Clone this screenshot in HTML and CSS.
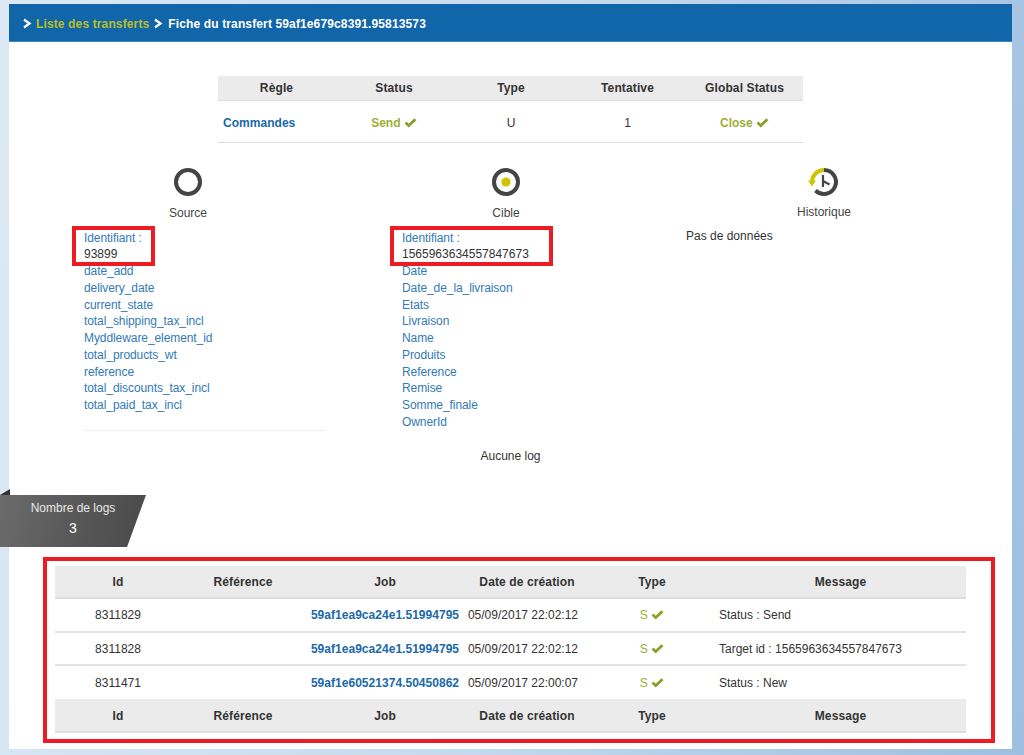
FILE: index.html
```html
<!DOCTYPE html>
<html lang="fr">
<head>
<meta charset="utf-8">
<title>Fiche du transfert</title>
<link rel="stylesheet" href="styles.css">
</head>
<body>
<svg class="defs" width="0" height="0" aria-hidden="true">
  <defs>
    <symbol id="check" viewBox="0 0 14 11"><path d="M0.5 6 L2.6 3.9 L5 6.2 L11.3 0.3 L13.5 2.4 L5 10.5 Z"/></symbol>
    <symbol id="chev" viewBox="0 0 9 11"><path d="M1.5 0.5 L8.5 5.5 L1.5 10.5 L0.5 8.3 L4.6 5.5 L0.5 2.7 Z"/></symbol>
  </defs>
</svg>
<div class="page">
  <header class="bar">
    <svg class="chev"><use href="#chev"/></svg>
    <a class="crumb" href="#">Liste des transferts</a>
    <svg class="chev"><use href="#chev"/></svg>
    <span class="current">Fiche du transfert 59af1e679c8391.95813573</span>
  </header>
  <main class="panel">
    <table class="summary">
      <thead><tr><th>Règle</th><th>Status</th><th>Type</th><th>Tentative</th><th>Global Status</th></tr></thead>
      <tbody><tr>
        <td class="left"><a class="strong-link" href="#">Commandes</a></td>
        <td class="ok strong">Send <svg class="check"><use href="#check"/></svg></td>
        <td>U</td>
        <td>1</td>
        <td class="ok strong">Close <svg class="check"><use href="#check"/></svg></td>
      </tr></tbody>
    </table>

    <section class="columns">
      <div class="col">
        <div class="head">
          <svg class="icon" viewBox="0 0 28 28"><circle cx="14" cy="14" r="12" fill="none" stroke="#444" stroke-width="4"/></svg>
          <div class="label">Source</div>
        </div>
        <div class="fields">
          <div class="hl hl-source">
            <div class="key">Identifiant :</div>
            <div class="val">93899</div>
          </div>
          <div class="key">date_add</div>
          <div class="key">delivery_date</div>
          <div class="key">current_state</div>
          <div class="key">total_shipping_tax_incl</div>
          <div class="key">Myddleware_element_id</div>
          <div class="key">total_products_wt</div>
          <div class="key">reference</div>
          <div class="key">total_discounts_tax_incl</div>
          <div class="key">total_paid_tax_incl</div>
          <div class="rule"></div>
        </div>
      </div>
      <div class="col">
        <div class="head">
          <svg class="icon" viewBox="0 0 28 28"><circle cx="14" cy="14" r="12" fill="none" stroke="#444" stroke-width="4"/><circle cx="14" cy="14" r="4.6" fill="#d0c400"/></svg>
          <div class="label">Cible</div>
        </div>
        <div class="fields">
          <div class="hl hl-target">
            <div class="key">Identifiant :</div>
            <div class="val">1565963634557847673</div>
          </div>
          <div class="key">Date</div>
          <div class="key">Date_de_la_livraison</div>
          <div class="key">Etats</div>
          <div class="key">Livraison</div>
          <div class="key">Name</div>
          <div class="key">Produits</div>
          <div class="key">Reference</div>
          <div class="key">Remise</div>
          <div class="key">Somme_finale</div>
          <div class="key">OwnerId</div>
        </div>
      </div>
      <div class="col">
        <div class="head head-history">
          <svg class="icon" viewBox="0 0 28 28">
            <path d="M14 2 A12 12 0 1 1 5.5 22.5" fill="none" stroke="#444" stroke-width="4"/>
            <path d="M2 13 A12 12 0 0 1 14 2" fill="none" stroke="#d0c400" stroke-width="4"/>
            <path d="M-2 12.5 L6 12.5 L2 18.5 Z" fill="#d0c400"/>
            <path d="M13 7 L13 19 M13 13 L19.5 16.5" fill="none" stroke="#444" stroke-width="2.2"/>
          </svg>
          <div class="label">Historique</div>
        </div>
        <div class="nodata">Pas de données</div>
      </div>
    </section>

    <p class="nolog">Aucune log</p>

    <div class="badge">
      <div class="badge-fold"></div>
      <div class="badge-title">Nombre de logs</div>
      <div class="badge-num">3</div>
    </div>

    <section class="logbox">
      <table class="logs">
        <colgroup><col class="c-id"><col class="c-ref"><col class="c-job"><col class="c-date"><col class="c-type"><col class="c-msg"></colgroup>
        <thead><tr><th>Id</th><th>Référence</th><th>Job</th><th>Date de création</th><th>Type</th><th>Message</th></tr></thead>
        <tbody>
          <tr><td>8311829</td><td></td><td><a class="strong-link" href="#">59af1ea9ca24e1.51994795</a></td><td class="date">05/09/2017 22:02:12</td><td class="ok">S <svg class="check"><use href="#check"/></svg></td><td class="left msg">Status : Send</td></tr>
          <tr><td>8311828</td><td></td><td><a class="strong-link" href="#">59af1ea9ca24e1.51994795</a></td><td class="date">05/09/2017 22:02:12</td><td class="ok">S <svg class="check"><use href="#check"/></svg></td><td class="left msg">Target id : 1565963634557847673</td></tr>
          <tr><td>8311471</td><td></td><td><a class="strong-link" href="#">59af1e60521374.50450862</a></td><td class="date">05/09/2017 22:00:07</td><td class="ok">S <svg class="check"><use href="#check"/></svg></td><td class="left msg">Status : New</td></tr>
        </tbody>
        <tfoot><tr><th>Id</th><th>Référence</th><th>Job</th><th>Date de création</th><th>Type</th><th>Message</th></tr></tfoot>
      </table>
    </section>
  </main>
</div>
</body>
</html>
```

FILE: styles.css
```css
*, *::before, *::after { box-sizing: border-box; }
html, body { margin: 0; height: 755px; overflow: hidden; }
body {
  background: linear-gradient(100deg, #dce9f5 0%, #c6daee 50%, #9dbfe0 100%);
  font-family: "Liberation Sans", Arial, sans-serif;
  font-size: 12px;
  color: #333;
}
.defs { position: absolute; }
.page { padding: 4px 12px 6px 9px; }

.bar {
  height: 38px;
  background: #1165a9;
  border-bottom: 1px solid #3f87c0;
  display: flex;
  align-items: center;
  padding: 2px 0 0 14px;
  font-weight: bold;
  font-size: 12px;
  letter-spacing: .13px;
}
.chev { width: 9px; height: 11px; fill: #fff; margin-right: 4px; }
.crumb { color: #b9bf2b; text-decoration: none; margin-right: 5px; }
.current { color: #fff; margin-left: 1px; }

.panel {
  position: relative;
  background: #fff;
  height: 707px;
  padding-top: 34px;
}

table { border-collapse: collapse; border-spacing: 0; table-layout: fixed; }
th { font-weight: bold; color: #333; background: #ebebeb; text-align: center; padding: 0; letter-spacing: .12px; }
td { text-align: center; padding: 0; color: #333; }
.left { text-align: left; }
.strong-link { color: #1a69a8; font-weight: bold; text-decoration: none; letter-spacing: .03px; }
.strong { font-weight: bold; }
td.ok { color: #9dae33; }
.check { width: 13px; height: 10px; fill: #88a02a; vertical-align: -1px; }

.summary { width: 585px; margin-left: 209px; }
.summary th { height: 24px; width: 117px; border-bottom: 1px solid #ddd; }
.summary th:nth-child(2), .summary th:nth-child(3) { padding-left: 1px; }
.summary td { height: 42px; border-bottom: 1px solid #ddd; padding-top: 3px; }
.summary td:nth-child(2), .summary td:nth-child(3) { padding-left: 1px; }
.summary td.left { padding-left: 5px; }

.columns {
  display: grid;
  grid-template-columns: repeat(3, 318px);
  margin: 25px 0 0 20px;
}
.head { height: 62px; display: flex; flex-direction: column; align-items: center; }
.icon { width: 28px; height: 28px; overflow: visible; }
.label { margin-top: 10px; line-height: 14px; color: #444; }
.head-history .label { margin-top: 9px; }

.fields { padding-left: 55px; }
.key, .val { line-height: 16.75px; height: 16.75px; white-space: nowrap; }
.key { color: #337ab7; letter-spacing: -.08px; }
.val { color: #333; }
.hl { position: relative; }
.hl::after {
  content: "";
  position: absolute;
  top: -4px;
  left: -12px;
  height: 40px;
  border: 4px solid #ed1c24;
}
.hl-source::after { width: 83px; }
.hl-target::after { width: 163px; }
.rule { width: 242px; margin-top: 16px; border-top: 1px solid #eee; }
.nodata { padding-left: 21px; line-height: 16px; margin-top: -2px; }

.nolog { margin: 0; position: absolute; top: 406px; left: 0; width: 1003px; padding-left: 0; text-align: center; line-height: 16px; }

.badge {
  position: absolute;
  left: -9px;
  top: 453px;
  width: 146px;
  height: 52px;
  color: #fff;
  text-align: center;
  padding-top: 6px;
}
.badge::before {
  content: "";
  position: absolute;
  inset: 0;
  background: linear-gradient(100deg, #6b6b6b 0%, #585858 50%, #4a4a4a 100%);
  clip-path: polygon(0 0, 100% 0, 87% 100%, 0 100%);
}
.badge-fold {
  position: absolute;
  left: 0;
  top: -6px;
  width: 10px;
  height: 6px;
  background: #333;
  clip-path: polygon(0 100%, 100% 0, 100% 100%);
}
.badge-title, .badge-num { position: relative; padding-right: 0; }
.badge-title { line-height: 14px; color: #e8e8e8; }
.badge-num { font-size: 14px; line-height: 18px; margin-top: 4px; }

.logbox {
  position: absolute;
  left: 34px;
  top: 515px;
  width: 952px;
  height: 186px;
  border: 4px solid #ed1c24;
  padding: 5px 0 0 8px;
}
.logs { width: 911px; }
.c-id { width: 126px; }
.c-ref { width: 124px; }
.c-job { width: 160px; }
.c-date { width: 124px; }
.c-type { width: 126px; }
.c-msg { width: 251px; }
.logs thead th { height: 32px; border-bottom: 2px solid #ddd; }
.logs tfoot th { height: 33px; border-bottom: 2px solid #ddd; padding-top: 2px; }
.logs td { height: 33.5px; border-bottom: 2px solid #e3e3e3; padding-top: 1px; }
.logs tbody tr:last-child td { border-bottom: 0; }
.logs td.msg { padding-left: 4px; }
.logs td.date { padding-right: 8px; }
```
